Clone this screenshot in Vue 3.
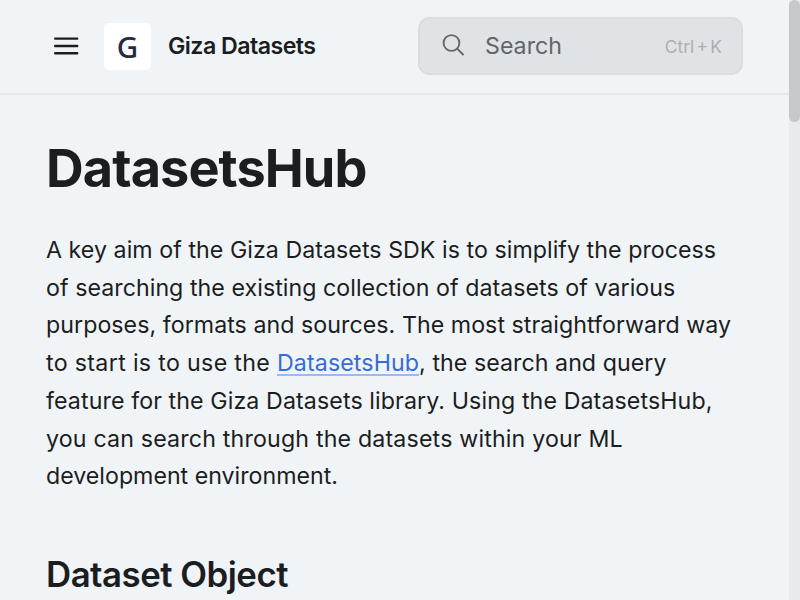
<script setup>
const docTitle = 'DatasetsHub'
</script>

<template>
  <div class="window">
    <div class="page">
      <header class="topbar">
        <button class="menu" aria-label="Open menu">
          <svg viewBox="0 0 26 20" width="26" height="20">
            <path d="M2.2 2.6H24.2M2.2 10H24.2M2.2 17.2H24.2" fill="none" stroke="#1b1d23" stroke-width="2.4" stroke-linecap="round" />
          </svg>
        </button>
        <div class="logo">G</div>
        <div class="brand">Giza Datasets</div>
        <div class="search">
          <svg class="lens" viewBox="0 0 24 24" width="24" height="24">
            <circle cx="9.5" cy="9" r="7.9" />
            <path d="M15.2 14.7L21 20.5" />
          </svg>
          <span class="label">Search</span>
          <span class="keys">Ctrl + K</span>
        </div>
      </header>
      <main class="content">
        <h1>{{ docTitle }}</h1>
        <p>
          <span class="t1">A key aim of the Giza Datasets SDK is to simplify the process</span><br />
          <span class="t1">of searching the existing collection of datasets of various</span><br />
          <span class="t1">purposes, formats and sources. The most straightforward way</span><br />
          <span class="t4">to start is to use the </span><a>DatasetsHub</a><span class="t1">, the search and query</span><br />
          <span class="t2">feature for the Giza Datasets library. Using the DatasetsHub,</span><br />
          <span class="t3">you can search through the datasets within your ML</span><br />
          <span>development environment.</span>
        </p>
        <h2>Dataset Object</h2>
      </main>
    </div>
    <div class="track"><div class="thumb"></div></div>
  </div>
</template>

<style>
body {
  margin: 0;
  overflow: hidden;
}
</style>

<style scoped>
.window {
  display: flex;
  width: 800px;
  height: 600px;
  overflow: hidden;
  background: #f0f4f7;
  color: #1b1d21;
  font-family: Inter, "Liberation Sans", sans-serif;
}
.page {
  width: 789px;
}
.track {
  width: 11px;
  background: #e7ebee;
}
.thumb {
  height: 122px;
  border-radius: 5.5px;
  background: #c5c9cc;
}
.topbar {
  box-sizing: border-box;
  height: 95px;
  padding: 0 46px 1px 53px;
  display: flex;
  align-items: center;
  border-bottom: 2px solid #e4e8eb;
}
.menu {
  display: flex;
  padding: 0;
  border: 0;
  background: none;
}
.logo {
  width: 47px;
  height: 47px;
  margin-left: 25px;
  border-radius: 5px;
  background: #fff;
  color: #252b40;
  font: 500 29.5px/47px "Noto Sans", "Open Sans", sans-serif;
  text-align: center;
}
.brand {
  margin-left: 17px;
  font-size: 23.2px;
  font-weight: 600;
  letter-spacing: -0.55px;
  white-space: nowrap;
}
.search {
  box-sizing: border-box;
  width: 325px;
  height: 58px;
  margin-left: auto;
  padding: 0 19px 0 22px;
  display: flex;
  align-items: center;
  border: 2px solid #d9dde0;
  border-radius: 11.6px;
  background: #dfe3e6;
}
.lens {
  fill: none;
  stroke: #66696c;
  stroke-width: 1.9;
  stroke-linecap: round;
}
.label {
  margin-left: 19px;
  color: #626568;
  font-size: 23.2px;
}
.keys {
  margin-left: auto;
  color: #abafb2;
  font-size: 17.4px;
  word-spacing: -2.6px;
}
.content {
  padding: 44px 46px;
}
h1 {
  margin: 0;
  font-size: 52.2px;
  line-height: 58px;
  font-weight: 700;
  letter-spacing: -0.9px;
}
p {
  margin: 35px 0 0;
  font-size: 23.2px;
  line-height: 37.7px;
  white-space: nowrap;
}
.t1 {
  letter-spacing: 0.045px;
}
.t2 {
  letter-spacing: 0.1px;
}
.t3 {
  letter-spacing: 0.17px;
}
.t4 {
  letter-spacing: 0.33px;
}
a {
  color: #346ddb;
  letter-spacing: 0.1px;
  text-decoration: underline;
  text-decoration-color: #9dbaf0;
  text-decoration-thickness: 2px;
  text-underline-offset: 3px;
  text-decoration-skip-ink: none;
}
h2 {
  margin: 56px 0 0;
  font-size: 34.8px;
  line-height: 44px;
  font-weight: 600;
  letter-spacing: -0.5px;
}
</style>
